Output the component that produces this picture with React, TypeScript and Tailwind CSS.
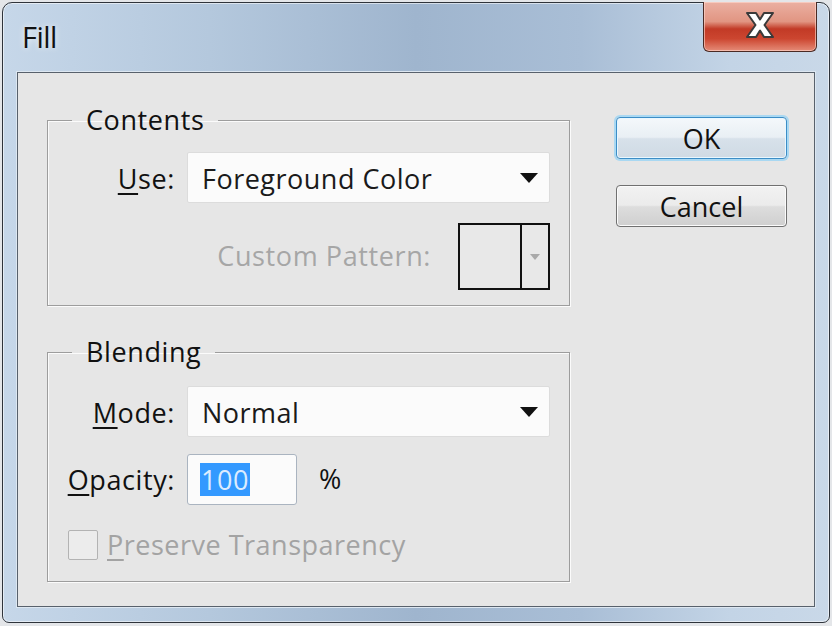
import React from 'react';

const font = "font-['Open_Sans','Noto_Sans',sans-serif]";

function Arrow({ className = '' }: { className?: string }) {
  return (
    <svg width="18" height="10" viewBox="0 0 18 10" className={className}>
      <path d="M0 0h18L9 10z" fill="#111" />
    </svg>
  );
}

function Select({ value }: { value: string }) {
  return (
    <div className="w-[363px] h-[51px] flex items-center justify-between pl-[14px] pr-[11px] bg-[#fbfbfb] border border-[#dcdcdc] rounded-[2px] text-[27px] tracking-[0.5px] text-[#1a1a1a]">
      <span className="mt-[4px]">{value}</span>
      <Arrow />
    </div>
  );
}

function CloseButton() {
  return (
    <div className="mr-[12px] w-[114px] h-[50px] -mt-px flex items-center justify-center rounded-b-[6px] border border-t-0 border-[#4a2a24] bg-[linear-gradient(to_bottom,#ebb0a2_0%,#e19582_40%,#c23a26_55%,#cc4630_75%,#e58c78_100%)] shadow-[inset_0_0_0_1px_rgba(255,220,210,0.6)]">
      <svg width="32" height="28" viewBox="0 0 32 28" className="mb-[4px]">
        <path
          d="M3 2h9l4 6.5 4-6.5h9l-8.5 12 8.5 12h-9l-4-6.5-4 6.5H3l8.5-12z"
          fill="#fff"
          stroke="#3a3a3a"
          strokeWidth="2"
          strokeLinejoin="round"
        />
      </svg>
    </div>
  );
}

export default function App() {
  return (
    <div className={`w-[832px] h-[626px] bg-[#e4e6e9] pl-[2px] pr-[2px] pt-[2px] pb-[3px] ${font}`}>
      <div className="h-full flex flex-col rounded-t-[10px] rounded-b-[7px] border border-[#2f343b] bg-[linear-gradient(to_right,#c6d7e9_0%,#b4c8dd_25%,#9fb5ce_50%,#a9bed6_70%,#c3d4e6_88%,#c9d8e8_100%)] shadow-[inset_0_0_0_1px_rgba(255,255,255,0.55)]">
        <div className="h-[69px] flex items-start justify-between">
          <div className="pl-[19px] pt-[19px] text-[29px] leading-none tracking-[-0.5px] text-[#111] [text-shadow:0_0_6px_rgba(255,255,255,0.9)]">
            Fill
          </div>
          <CloseButton />
        </div>
        <div className="flex-1 ml-[14px] mr-[14px] mb-[15px] border border-[#58616c] bg-[#e6e6e6] shadow-[0_0_0_1px_#dde7f1] flex pl-[29px] pt-[29px] text-[27px] tracking-[0.6px]">
          <div className="w-[523px] flex flex-col">
            <fieldset className="border border-[#9d9d9d] shadow-[inset_1px_1px_0_#fbfbfb,1px_1px_0_#fbfbfb] pb-[15px]">
              <legend className="ml-[24px] px-[14px] leading-[36px] text-[#111]">Contents</legend>
              <div className="flex items-center mt-[14px]">
                <div className="w-[128px] pr-[1px] text-right text-[#111] mt-[4px]">
                  <span className="underline underline-offset-[4px] decoration-[2px]">U</span>se:
                </div>
                <div className="ml-[11px]">
                  <Select value="Foreground Color" />
                </div>
              </div>
              <div className="flex items-center justify-end mt-[20px] mr-[19px]">
                <span className="text-[#a6a6a6] mr-[27px]">Custom Pattern:</span>
                <div className="w-[92px] h-[67px] flex border-2 border-[#111] bg-[#e8e8e8]">
                  <div className="flex-1 border-r-2 border-[#111]" />
                  <div className="w-[26px] flex items-center justify-center">
                    <svg width="10" height="6" viewBox="0 0 10 6">
                      <path d="M0 0h10L5 6z" fill="#a9a9a9" />
                    </svg>
                  </div>
                </div>
              </div>
            </fieldset>

            <fieldset className="mt-[28px] border border-[#9d9d9d] shadow-[inset_1px_1px_0_#fbfbfb,1px_1px_0_#fbfbfb] pb-[15px]">
              <legend className="ml-[24px] px-[14px] leading-[36px] text-[#111]">Blending</legend>
              <div className="flex items-center mt-[16px]">
                <div className="w-[128px] pr-[1px] text-right text-[#111] mt-[4px]">
                  <span className="underline underline-offset-[4px] decoration-[2px]">M</span>ode:
                </div>
                <div className="ml-[11px]">
                  <Select value="Normal" />
                </div>
              </div>
              <div className="flex items-center mt-[17px]">
                <div className="w-[128px] pr-[1px] text-right text-[#111] mt-[2px]">
                  <span className="underline underline-offset-[4px] decoration-[2px]">O</span>pacity:
                </div>
                <div className="ml-[11px] w-[110px] h-[51px] flex items-center pl-[12px] bg-[#fbfbfb] border border-[#aab4c0] rounded-[3px]">
                  <span className="bg-[#3399ff] text-[#dcecff] leading-[33px] px-px tracking-[0.5px]">100</span>
                </div>
                <span className="ml-[22px] text-[#111]">%</span>
              </div>
              <div className="flex items-center mt-[20px] ml-[20px]">
                <div className="w-[30px] h-[30px] border border-[#b3b3b3] bg-[#ececec] rounded-[2px]" />
                <span className="ml-[9px] text-[#a3a3a3] tracking-[0.5px]">
                  <span className="underline underline-offset-[4px] decoration-[2px]">P</span>reserve Transparency
                </span>
              </div>
            </fieldset>
          </div>

          <div className="ml-[46px] pt-[15px] flex flex-col w-[171px] tracking-normal">
            <button className="h-[42px] rounded-[4px] border border-[#3c8dc6] bg-[linear-gradient(to_bottom,#f4f8fb_0%,#e9eff4_48%,#d7e1ea_52%,#cfdae4_100%)] shadow-[0_0_0_2px_#a9d8f2,inset_0_0_0_1px_#e8f7ff] text-[27px] leading-none text-[#111]">
              OK
            </button>
            <button className="mt-[26px] h-[42px] rounded-[4px] border border-[#707070] bg-[linear-gradient(to_bottom,#f2f2f2_0%,#ebebeb_48%,#dddddd_52%,#cfcfcf_100%)] shadow-[inset_0_0_0_1px_#fbfbfb] text-[27px] leading-none text-[#111]">
              Cancel
            </button>
          </div>
        </div>
      </div>
    </div>
  );
}
